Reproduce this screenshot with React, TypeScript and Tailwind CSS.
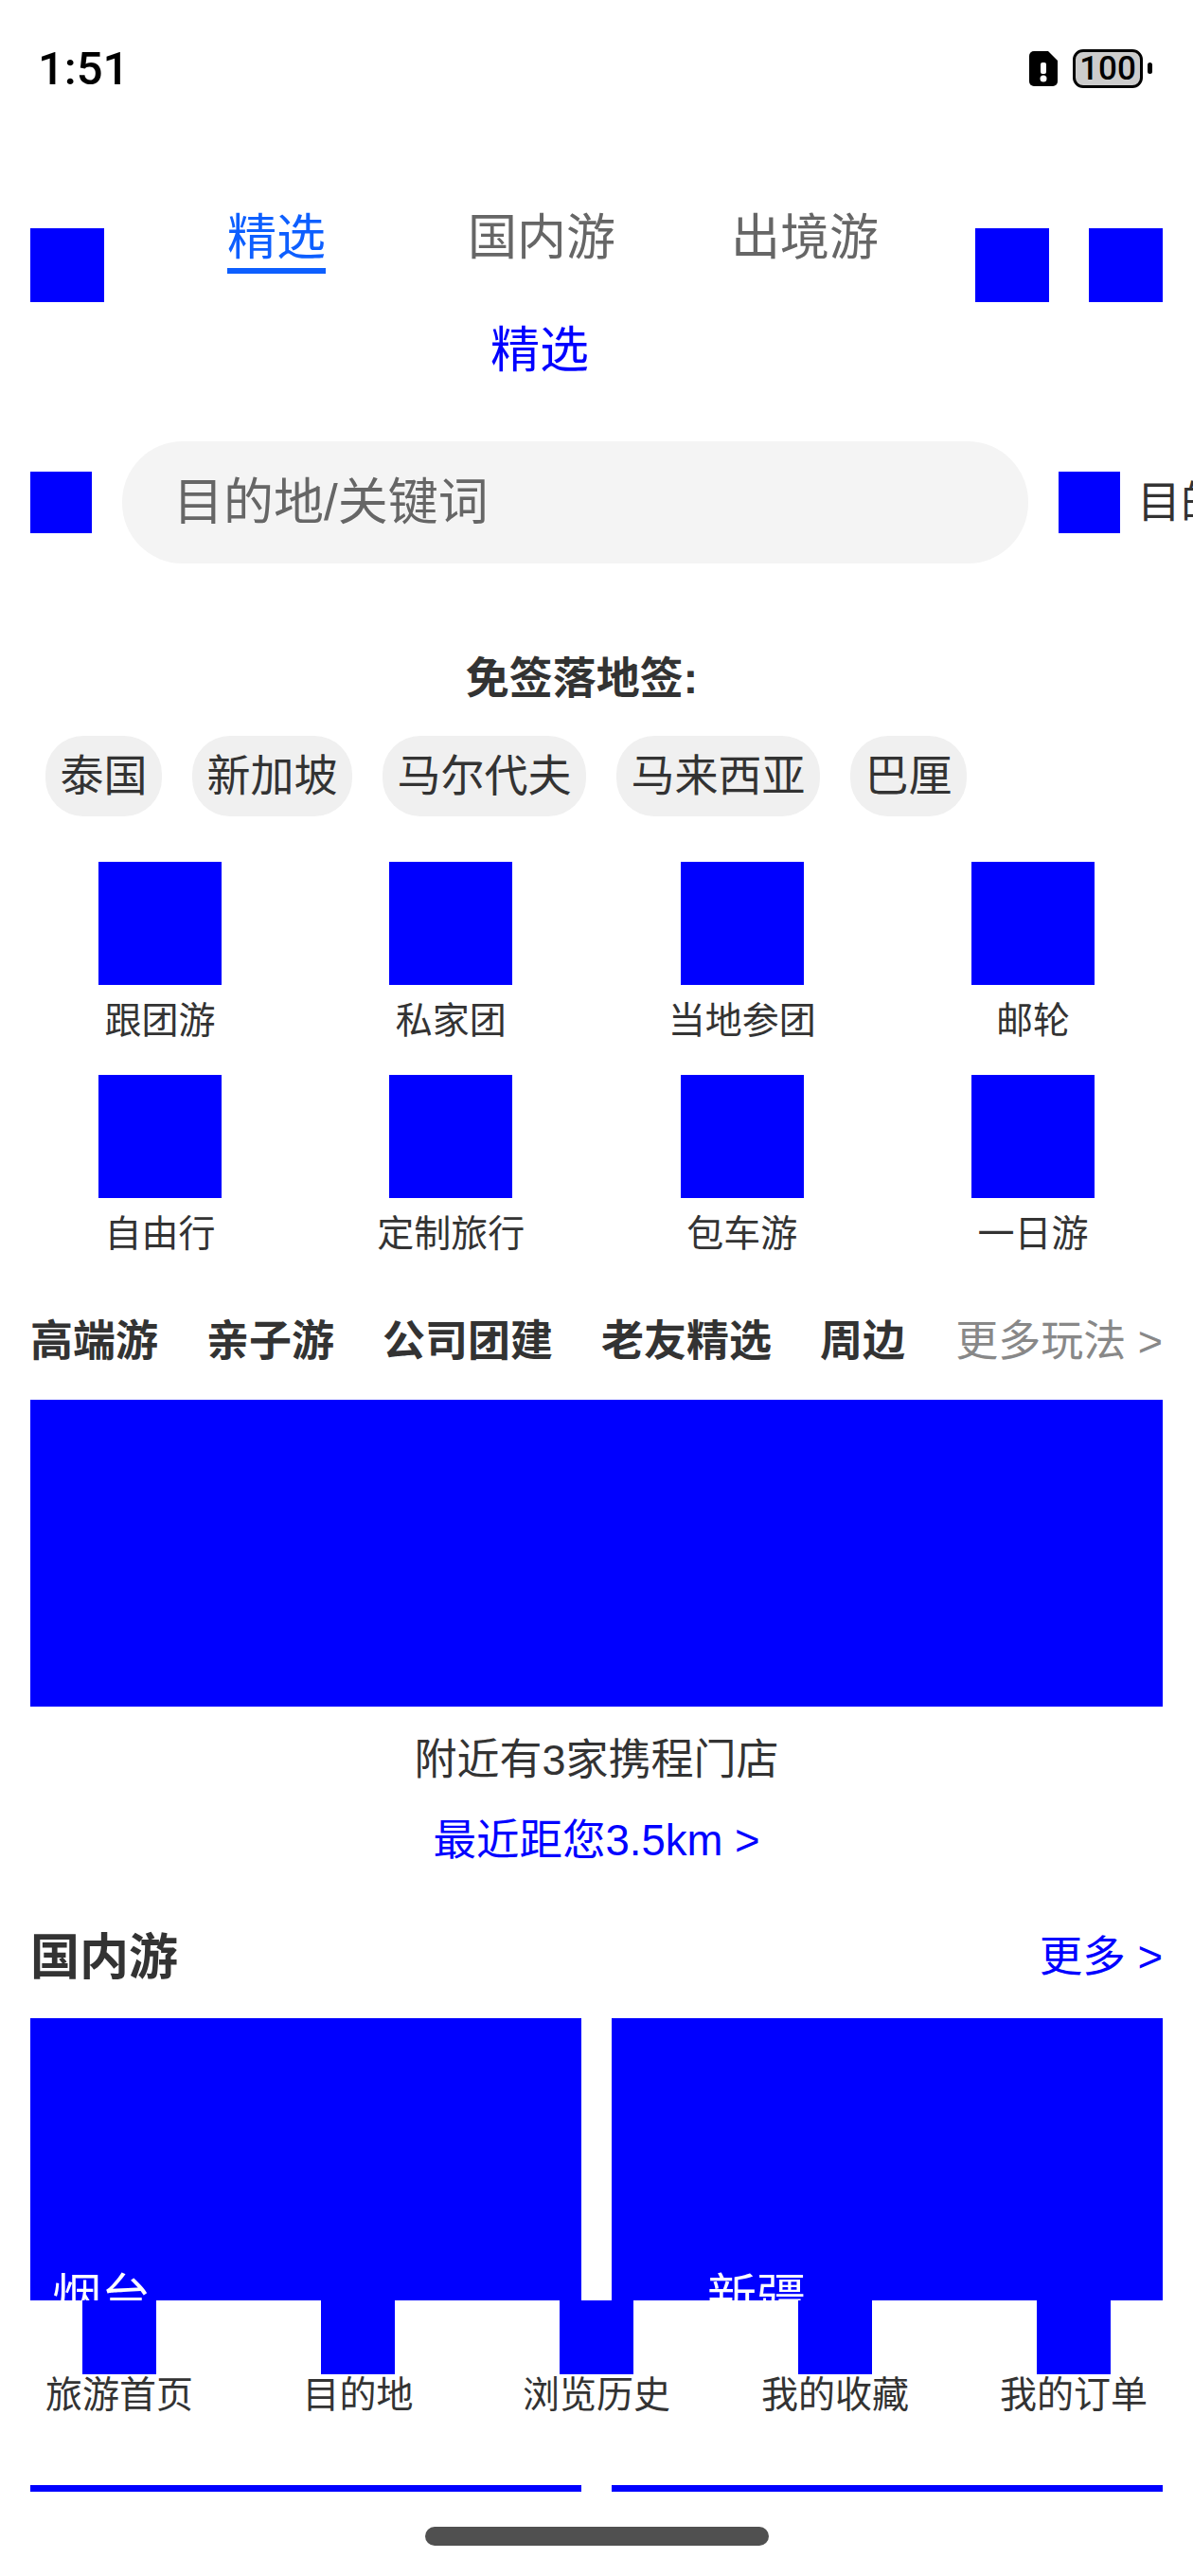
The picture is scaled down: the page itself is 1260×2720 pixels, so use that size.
const gridItems = ['跟团游', '私家团', '当地参团', '邮轮', '自由行', '定制旅行', '包车游', '一日游'];
const chips = ['泰国', '新加坡', '马尔代夫', '马来西亚', '巴厘'];
const navItems = ['旅游首页', '目的地', '浏览历史', '我的收藏', '我的订单'];

const StatusBar = () => (
  <div className="flex items-center justify-between h-[144px] pl-[40px] pr-[43px]">
    <span className="text-[49px] font-medium text-black leading-none font-['Roboto','Noto_Sans_CJK_SC',sans-serif]">1:51</span>
    <div className="flex items-center">
      <svg width="30" height="37" viewBox="0 0 30 37" className="block">
        <path d="M5 0H20L30 10V32a5 5 0 0 1-5 5H5a5 5 0 0 1-5-5V5a5 5 0 0 1 5-5Z" fill="#000" />
        <rect x="12" y="12" width="6" height="12" rx="2" fill="#fff" />
        <circle cx="15" cy="29" r="3.5" fill="#fff" />
      </svg>
      <div className="ml-[16px] w-[74px] h-[41px] rounded-[11px] border-[3px] border-black bg-[#cccccc] flex items-center justify-center">
        <span className="text-[35px] font-medium text-black leading-none font-['Roboto',sans-serif]">100</span>
      </div>
      <div className="ml-[5px] w-[5px] h-[12px] rounded-full bg-black" />
    </div>
  </div>
);

export default function App() {
  return (
    <div className="relative w-[1260px] h-[2720px] overflow-hidden bg-white text-[#333333] font-['Liberation_Sans','Noto_Sans_CJK_SC',sans-serif]">
      <StatusBar />

      {/* top tabs */}
      <div className="flex items-start px-8 mt-[77px] h-[98px]">
        <div className="w-[78px] h-[78px] mt-[20px] bg-[#0000ff] shrink-0" />
        <div className="ml-[130px] w-[104px]">
          <div className="text-[52px] leading-[60px] text-[#0d5fff]">精选</div>
          <div className="h-[6px] mt-[2px] bg-[#0d5fff]" />
        </div>
        <div className="ml-[150px] text-[52px] leading-[60px] text-[#666666]">国内游</div>
        <div className="ml-[122px] text-[52px] leading-[60px] text-[#666666]">出境游</div>
        <div className="ml-auto w-[78px] h-[78px] mt-[20px] bg-[#0000ff] shrink-0" />
        <div className="ml-[42px] w-[78px] h-[78px] mt-[20px] bg-[#0000ff] shrink-0" />
      </div>
      <div className="mt-[21px] pl-[518px] text-[52px] leading-[60px] text-[#0000ff]">精选</div>

      {/* search */}
      <div className="flex items-center pl-8 mt-[66px] w-[1400px]">
        <div className="w-[65px] h-[65px] bg-[#0000ff] shrink-0" />
        <div className="ml-[32px] w-[957px] h-[129px] rounded-[64px] bg-[#f4f4f4] flex items-center pl-[54px] shrink-0">
          <span className="text-[53px] text-[#666666]">目的地/关键词</span>
        </div>
        <div className="ml-[32px] w-[65px] h-[65px] bg-[#0000ff] shrink-0" />
        <span className="ml-[18px] text-[46px] whitespace-nowrap">目的地</span>
      </div>

      <div className="mt-[91px] pr-[31px] text-center text-[46px] leading-[60px] font-bold">免签落地签:</div>

      <div className="flex gap-8 pl-12 mt-[31px]">
        {chips.map(c => (
          <div key={c} className="h-[85px] px-[15.5px] rounded-[40px] bg-[#f0f0f0] flex items-center text-[46px]">{c}</div>
        ))}
      </div>

      {/* category grid */}
      <div className="grid grid-cols-[repeat(4,307.33px)] justify-center gap-y-8 mt-12">
        {gridItems.map(name => (
          <div key={name} className="flex flex-col items-center">
            <div className="w-[130px] h-[130px] bg-[#0000ff]" />
            <div className="mt-[13px] text-[39px] leading-[50px]">{name}</div>
          </div>
        ))}
      </div>

      <div className="flex items-center px-8 mt-[59px] text-[45px] leading-[60px] font-bold">
        <span>高端游</span>
        <span className="ml-[51px]">亲子游</span>
        <span className="ml-[51px]">公司团建</span>
        <span className="ml-[51px]">老友精选</span>
        <span className="ml-[51px]">周边</span>
        <span className="ml-auto font-normal text-[#888888]">更多玩法 &gt;</span>
      </div>

      <div className="mx-8 mt-[31px] h-[324px] bg-[#0000ff]" />
      <div className="mt-[27px] text-center text-[45px] leading-[60px]">附近有3家携程门店</div>
      <div className="mt-[25px] text-center text-[45.5px] leading-[60px] text-[#0000ff]">最近距您3.5km &gt;</div>

      <div className="flex items-center justify-between px-8 mt-[58px] h-[70px]">
        <span className="text-[52px] font-bold">国内游</span>
        <span className="text-[45.5px] text-[#0000ff]">更多 &gt;</span>
      </div>

      <div className="flex gap-8 px-8 mt-[29px]">
        <div className="w-[582px] h-[500px] bg-[#0000ff] pt-[265px] pl-[23px] text-[52px] leading-[60px] text-white">烟台</div>
        <div className="w-[582px] h-[500px] bg-[#0000ff] pt-[265px] pl-[101px] text-[52px] leading-[60px] text-white">新疆</div>
      </div>

      <div className="mx-auto mt-[37px] w-[363px] h-[20px] rounded-full bg-[#505050]" />

      {/* bottom nav sits over the cards */}
      <div className="absolute left-0 top-[2429px] w-full h-[195px] bg-white grid grid-cols-5">
        {navItems.map(n => (
          <div key={n} className="flex flex-col items-center">
            <div className="w-[78px] h-[78px] bg-[#0000ff]" />
            <div className="text-[39px] leading-[44px]">{n}</div>
          </div>
        ))}
      </div>
    </div>
  );
}
